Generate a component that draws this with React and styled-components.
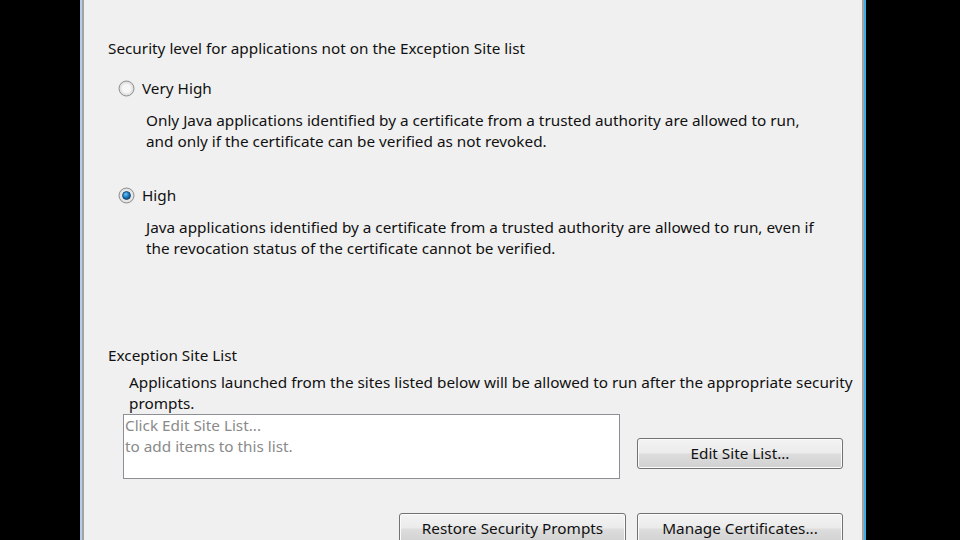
import React from 'react';
import styled, { createGlobalStyle } from 'styled-components';

const GlobalStyle = createGlobalStyle`
  html, body {
    margin: 0;
    padding: 0;
    background: #000;
  }
  body {
    font-family: "Noto Sans", "Open Sans", sans-serif;
    font-size: 15.3px;
    color: #111;
  }
`;

const Screen = styled.div`
  width: 960px;
  height: 540px;
  overflow: hidden;
  display: flex;
  padding-left: 80px;
  box-sizing: border-box;
`;

const Frame = styled.div`
  width: 786px;
  height: 540px;
  flex-shrink: 0;
  box-sizing: border-box;
  border-left: 2px solid #b4cde9;
  border-right: 2px solid #3cb1e8;
  display: flex;
`;

const Panel = styled.div`
  flex: 1;
  min-width: 0;
  overflow: hidden;
  box-sizing: border-box;
  border-left: 2px solid #a3a3a3;
  border-right: 2px solid #a3a3a3;
  background: #f0f0f0;
  padding: 38px 19px 0 24px;
  display: flex;
  flex-direction: column;
  line-height: 21px;
  white-space: nowrap;
`;

const Heading = styled.div`
  margin-top: ${p => p.$top || 0}px;
`;

const RadioRow = styled.label`
  display: flex;
  align-items: center;
  gap: 7px;
  margin-left: 10px;
  margin-top: ${p => p.$top}px;
`;

const Description = styled.p`
  margin: 11px 0 0 38px;
`;

const Indented = styled.p`
  margin: 6px 0 0 21px;
`;

const ListRow = styled.div`
  display: flex;
  gap: 17px;
  margin-left: 15px;
  align-items: flex-start;
`;

const SiteList = styled.div`
  width: 497px;
  height: 65px;
  flex-shrink: 0;
  box-sizing: border-box;
  background: #fff;
  border: 1px solid #8e8f94;
  padding: 0 1px;
  color: #8a8a8a;
`;

const ButtonRow = styled.div`
  display: flex;
  justify-content: flex-end;
  gap: 11px;
  margin-top: 34px;
`;

const Button = styled.button`
  flex-shrink: 0;
  width: ${p => p.$width}px;
  height: 31px;
  margin-top: ${p => p.$top || 0}px;
  box-sizing: border-box;
  border: 1px solid #727272;
  border-radius: 3px;
  box-shadow: inset 0 0 0 1px #fbfbfb;
  background: linear-gradient(#f3f3f3 0%, #ebebeb 48%, #dddddd 52%, #d0d0d0 100%);
  font-family: inherit;
  font-size: 15.3px;
  line-height: 21px;
  color: #111;
  padding: 0;
`;

const RadioIcon = ({ checked }) => (
  <svg width="17" height="17" viewBox="0 0 17 17">
    <defs>
      <radialGradient id="rim" cx="0.5" cy="0.5" r="0.5">
        <stop offset="0.6" stopColor="#f6f6f6" />
        <stop offset="1" stopColor="#d6d6d6" />
      </radialGradient>
      <radialGradient id="dot" cx="0.4" cy="0.35" r="0.7">
        <stop offset="0" stopColor="#6fc3f5" />
        <stop offset="0.5" stopColor="#1c7fc9" />
        <stop offset="1" stopColor="#0c3f6e" />
      </radialGradient>
    </defs>
    <circle cx="8.5" cy="8.5" r="7.5" fill="url(#rim)" stroke="#8c8e8f" strokeWidth="1" />
    <circle cx="8.5" cy="8.5" r="5.5" fill="none" stroke="#e4e4e4" strokeWidth="1" />
    {checked && (
      <circle cx="8.5" cy="8.5" r="4" fill="url(#dot)" stroke="#1b3f5e" strokeWidth="0.8" />
    )}
  </svg>
);

export default function App() {
  return (
    <>
      <GlobalStyle />
      <Screen>
        <Frame>
          <Panel>
            <Heading>Security level for applications not on the Exception Site list</Heading>

            <RadioRow $top={19}>
              <RadioIcon />
              <span>Very High</span>
            </RadioRow>
            <Description>
              Only Java applications identified by a certificate from a trusted authority are allowed to run,
              <br />
              and only if the certificate can be verified as not revoked.
            </Description>

            <RadioRow $top={33}>
              <RadioIcon checked />
              <span>High</span>
            </RadioRow>
            <Description>
              Java applications identified by a certificate from a trusted authority are allowed to run, even if
              <br />
              the revocation status of the certificate cannot be verified.
            </Description>

            <Heading $top={86}>Exception Site List</Heading>
            <Indented>
              Applications launched from the sites listed below will be allowed to run after the appropriate security
              <br />
              prompts.
            </Indented>

            <ListRow>
              <SiteList>
                Click Edit Site List...
                <br />
                to add items to this list.
              </SiteList>
              <Button $width={206} $top={24}>Edit Site List...</Button>
            </ListRow>

            <ButtonRow>
              <Button $width={227}>Restore Security Prompts</Button>
              <Button $width={206}>Manage Certificates...</Button>
            </ButtonRow>
          </Panel>
        </Frame>
      </Screen>
    </>
  );
}
